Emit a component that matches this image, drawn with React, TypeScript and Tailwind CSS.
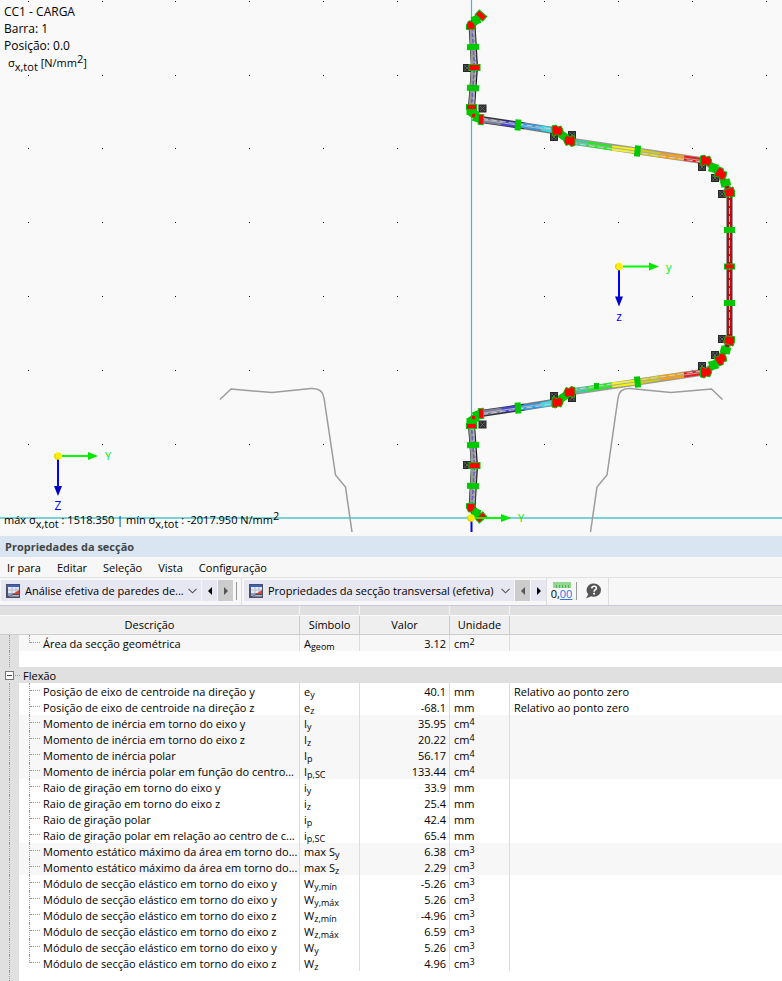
import React from 'react';

type Row = {
  label: string;
  symbol: string;
  sub: string;
  value: string;
  unit: string;
  exp?: string;
  note?: string;
  shaded?: boolean;
};

const BENDING_ROWS: Row[] = [
  { label: 'Posição de eixo de centroide na direção y', symbol: 'e', sub: 'y', value: '40.1', unit: 'mm', note: 'Relativo ao ponto zero' },
  { label: 'Posição de eixo de centroide na direção z', symbol: 'e', sub: 'z', value: '-68.1', unit: 'mm', note: 'Relativo ao ponto zero' },
  { label: 'Momento de inércia em torno do eixo y', symbol: 'I', sub: 'y', value: '35.95', unit: 'cm', exp: '4', shaded: true },
  { label: 'Momento de inércia em torno do eixo z', symbol: 'I', sub: 'z', value: '20.22', unit: 'cm', exp: '4', shaded: true },
  { label: 'Momento de inércia polar', symbol: 'I', sub: 'p', value: '56.17', unit: 'cm', exp: '4', shaded: true },
  { label: 'Momento de inércia polar em função do centro...', symbol: 'I', sub: 'p,SC', value: '133.44', unit: 'cm', exp: '4', shaded: true },
  { label: 'Raio de giração em torno do eixo y', symbol: 'i', sub: 'y', value: '33.9', unit: 'mm' },
  { label: 'Raio de giração em torno do eixo z', symbol: 'i', sub: 'z', value: '25.4', unit: 'mm' },
  { label: 'Raio de giração polar', symbol: 'i', sub: 'p', value: '42.4', unit: 'mm' },
  { label: 'Raio de giração polar em relação ao centro de c...', symbol: 'i', sub: 'p,SC', value: '65.4', unit: 'mm' },
  { label: 'Momento estático máximo da área em torno do...', symbol: 'max S', sub: 'y', value: '6.38', unit: 'cm', exp: '3', shaded: true },
  { label: 'Momento estático máximo da área em torno do...', symbol: 'max S', sub: 'z', value: '2.29', unit: 'cm', exp: '3', shaded: true },
  { label: 'Módulo de secção elástico em torno do eixo y', symbol: 'W', sub: 'y,mín', value: '-5.26', unit: 'cm', exp: '3' },
  { label: 'Módulo de secção elástico em torno do eixo y', symbol: 'W', sub: 'y,máx', value: '5.26', unit: 'cm', exp: '3' },
  { label: 'Módulo de secção elástico em torno do eixo z', symbol: 'W', sub: 'z,mín', value: '-4.96', unit: 'cm', exp: '3' },
  { label: 'Módulo de secção elástico em torno do eixo z', symbol: 'W', sub: 'z,máx', value: '6.59', unit: 'cm', exp: '3' },
  { label: 'Módulo de secção elástico em torno do eixo y', symbol: 'W', sub: 'y', value: '5.26', unit: 'cm', exp: '3' },
  { label: 'Módulo de secção elástico em torno do eixo z', symbol: 'W', sub: 'z', value: '4.96', unit: 'cm', exp: '3' },
];

const AREA_ROW: Row = { label: 'Área da secção geométrica', symbol: 'A', sub: 'geom', value: '3.12', unit: 'cm', exp: '2', shaded: true };

const MENU = ['Ir para', 'Editar', 'Seleção', 'Vista', 'Configuração'];

const GRID_X = [28, 102, 175, 249, 323, 397, 471, 544, 618, 692, 766];
const GRID_Y = [1, 75, 148, 222, 296, 370, 444, 518];

// Stress colour bands along the upper half of the profile: x1, y1, x2, y2, colour
const BANDS: [number, number, number, number, string][] = [
  [482, 120, 502, 123, '#7c7c9e'],
  [502, 123, 519, 125, '#4646dc'],
  [519, 125, 541, 128, '#2f9be8'],
  [541, 128, 556, 131, '#22e0ee'],
  [571, 142, 588, 144, '#2fd394'],
  [588, 144, 612, 148, '#19f019'],
  [612, 148, 637, 151, '#f5f500'],
  [637, 151, 660, 155, '#d2cc10'],
  [660, 155, 684, 158, '#ffa000'],
  [684, 158, 705, 161, '#f01818'],
];

const Marker = ({ x, y, w, h, r = 0, red = false }: { x: number; y: number; w: number; h: number; r?: number; red?: boolean }) => (
  <rect
    x={x - w / 2}
    y={y - h / 2}
    width={w}
    height={h}
    fill={red ? '#ff0000' : '#00c800'}
    stroke="#00c000"
    strokeWidth={red ? 1 : 0}
    transform={`rotate(${r} ${x} ${y})`}
  />
);

const Knot = ({ x, y, r = 0 }: { x: number; y: number; r?: number }) => (
  <path
    d="M-5 -5 L-1 -6 L1 -4 L4 -5 L6 -1 L5.500 3 L3 5 L0 3.500 L-4 5.500 L-5 2 Z"
    fill="#ff0000"
    stroke="#00c000"
    strokeWidth="1"
    transform={`translate(${x} ${y}) rotate(${r})`}
  />
);

const Weld = ({ x, y }: { x: number; y: number }) => (
  <g transform={`translate(${x} ${y})`}>
    <rect x="-4" y="-4" width="8" height="8" fill="#282828" />
    <path d="M-2.500 -2.500 L2.500 2.500 M2.500 -2.500 L-2.500 2.500" stroke="#777" strokeWidth="0.7" fill="none" />
    <rect x="-2.500" y="-2.500" width="5" height="5" stroke="#555" strokeWidth="0.5" fill="none" />
  </g>
);

const HalfProfile = () => (
  <g>
    <polyline points="480,15 472,25 474.5,67 471.5,108 475,115 481,119.5" fill="none" stroke="#111" strokeWidth="7" />
    <polyline points="480,15 472,25 474,67 471.5,108 475,115 481,119.5" fill="none" stroke="#9a9a9a" strokeWidth="5.600" />
    <polyline points="472,27 474.5,67 471.5,106" fill="none" stroke="#6262c4" strokeWidth="1.5" strokeDasharray="4 2" />
    <polyline points="473.5,27 476,67 473,106" fill="none" stroke="#ccc" strokeWidth="0.7" strokeDasharray="3 2" />
    <line x1="481" y1="119.5" x2="525" y2="126" stroke="#333" strokeWidth="7" />
    <line x1="525" y1="126" x2="556" y2="131" stroke="#777" strokeWidth="7" />
    <polyline points="556,131 563,136 570,141 705,161 713,167 720,174 725,183 729.5,192" fill="none" stroke="#9a9a9a" strokeWidth="7" />
    <polyline points="705,161 713,167 720,174 725,183 729.5,192" fill="none" stroke="#a01010" strokeWidth="4" />
    {BANDS.map(([x1, y1, x2, y2, color]) => (
      <line key={x1} x1={x1} y1={y1} x2={x2} y2={y2} stroke={color} strokeWidth="5" />
    ))}
    <line x1="482" y1="119.8" x2="556" y2="130.8" stroke="#b5b5b5" strokeWidth="1" />
    <line x1="571" y1="141.8" x2="705" y2="161" stroke="#aaa" strokeWidth="1" />
    <path d="M482 118.5 L556 129.5 M571 143 L705 162.5" stroke="#ddd" strokeWidth="0.8" strokeDasharray="6 3" />

    <Weld x={467} y={68} />
    <Weld x={482.5} y={108.5} />
    <Weld x={554} y={137} />
    <Weld x={572} y={135} />
    <Weld x={702} y={167} />
    <Weld x={715} y={178} />
    <Weld x={722} y={194} />

    <Marker x={476} y={20} w={8} h={9} r={-25} />
    <Marker x={481} y={15.5} w={10} h={6} r={42} red />
    <path d="M466.5 29.5 V25 L468.5 21 L472 21 L475 25 V29.5 Z" fill="#ff0000" stroke="#00c000" strokeWidth="1" />
    <Marker x={473} y={47} w={12} h={6} r={-2} />
    <Marker x={474.5} y={67.5} w={11} h={6} red />
    <Marker x={473} y={88} w={12} h={6} r={2} />
    <Marker x={471.5} y={112} w={10} h={6} />
    <Marker x={474} y={114} w={9} h={8} r={25} />
    <Marker x={477} y={118} w={8} h={8} r={20} />
    <Marker x={471.5} y={107} w={10} h={5} red />
    <Marker x={473.5} y={115.5} w={4} h={4} red />
    <Marker x={481} y={119.5} w={5} h={10} r={3} red />
    <Marker x={518} y={125} w={6} h={11} r={5} />
    <Marker x={563.5} y={136} w={8} h={8} r={35} />
    <Knot x={557} y={131} />
    <Knot x={570} y={140.5} r={180} />
    <Marker x={637.5} y={151} w={6} h={11} r={6} />
    <Marker x={713.5} y={168} w={9} h={9} r={15} />
    <Marker x={725.5} y={183} w={10} h={7} r={-15} />
    <Knot x={705.5} y={161} />
    <Knot x={720.5} y={174} r={35} />
    <path d="M723.500 190 L733 187 L734.500 191 V196.5 L725.500 197 Z" fill="#ff0000" stroke="#00c000" strokeWidth="1" />
    <Marker x={729.5} y={230} w={11} h={6} />
  </g>
);

const Axes = ({ x, y, h, v, vertical = true }: { x: number; y: number; h: string; v?: string; vertical?: boolean }) => (
  <g transform={`translate(${x} ${y})`}>
    <path d="M4 0 H31" stroke="#00f800" strokeWidth="2" />
    <path d="M30 -4 L40 0 L30 4 Z" fill="#00e800" />
    <text x="47" y="4" fontSize="11" fill="#00e800">{h}</text>
    {vertical && (
      <>
        <path d="M0 3 V31" stroke="#0000ff" strokeWidth="2" />
        <path d="M-4 30 L0 40 L4 30 Z" fill="#0000c8" />
        <text x="0" y="54" fontSize="12" textAnchor="middle" fill="#0000ff">{v}</text>
      </>
    )}
    <circle r="3.8" fill="#ffee00" />
    <path d="M-2.8 -2 A3.6 3.6 0 0 0 0 3.6" fill="none" stroke="#d8b400" strokeWidth="0.8" />
  </g>
);

const Drawing = () => (
  <svg className="block h-full w-full" viewBox="0 0 782 532" preserveAspectRatio="xMinYMin slice" aria-label="Secção transversal">
    {GRID_Y.map(y => GRID_X.map(x => <rect key={`${x}-${y}`} x={x} y={y} width="1" height="1" fill="#000" />))}
    <path d="M471.500 0 V518" stroke="#38c0c0" strokeWidth="1.200" />
    <path d="M0 518 H782" stroke="#78d4d4" strokeWidth="2" />
    <g fill="none" stroke="#9c9c9c" strokeWidth="1.5">
      <path d="M220 399.500 L231 389 L272 392.500 L311 388.500 Q323 388 324 398 L335.500 475 L345.500 487 L352 532" />
      <path d="M722.500 399.500 L711.500 389 L671 392.500 L630 388.500 Q619 388 618 398 L607 475 L597 487 L590.500 532" />
    </g>
    <g>
      <line x1="729.500" y1="192" x2="729.500" y2="341" stroke="#9a9a9a" strokeWidth="7" />
      <line x1="729.500" y1="192" x2="729.500" y2="341" stroke="#b80c0c" strokeWidth="5" />
      <line x1="729.500" y1="192" x2="729.500" y2="341" stroke="#ddd" strokeWidth="1" strokeDasharray="6 2" />
    </g>
    <HalfProfile />
    <g transform="translate(0 533) scale(1 -1)">
      <HalfProfile />
    </g>
    <Marker x={729.5} y={266.5} w={10} h={5} red />
    <Marker x={596.5} y={386} w={5} h={6} />
    <Axes x={619} y={266.5} h="y" v="z" />
    <Axes x={58} y={456} h="Y" v="Z" />
    <path d="M471.500 518 V532" stroke="#0000ff" strokeWidth="2" />
    <Axes x={471} y={518} h="Y" vertical={false} />
  </svg>
);

const Sigma = () => (
  <>
    σ<span className="relative top-1">x,tot</span>
  </>
);

const TableIcon = () => (
  <svg width="14" height="14" viewBox="0 0 14 14" className="shrink-0">
    <rect width="14" height="14" fill="#4a5062" />
    <rect x="1" y="1" width="12" height="3" fill="#3c5fc4" />
    <rect x="2" y="3" width="11" height="6" fill="#e6e9f0" />
    <path d="M2 6 H13 M6 3 V9 M10 3 V9" stroke="#b3bccd" strokeWidth="1" />
    <path d="M2 9 H8 L4 12 H2 Z" fill="#8fa0c8" />
    <path d="M7 10 L13 6 V10 Z" fill="#d84030" />
    <path d="M3 12.500 H13 V11 H7 Z" fill="#b4bac6" />
  </svg>
);

const Combo = ({ label, value, width }: { label: string; value: string; width: string }) => (
  <div className={`relative flex h-[21px] items-center bg-[#e7e7f2] ${width}`}>
    <span className="pointer-events-none absolute left-[5px]"><TableIcon /></span>
    <select aria-label={label} className="h-full w-full appearance-none bg-transparent pr-4 pl-6 text-[11px] leading-4 outline-none">
      <option>{value}</option>
    </select>
    <svg width="9" height="6" viewBox="0 0 9 6" className="pointer-events-none absolute right-1">
      <path d="M0.500 0.800 L4.500 4.800 L8.500 0.800" fill="none" stroke="#555" strokeWidth="1.100" />
    </svg>
  </div>
);

const ArrowButton = ({ label, left = false, disabled = false }: { label: string; left?: boolean; disabled?: boolean }) => (
  <button
    aria-label={label}
    disabled={disabled}
    className={`flex h-[21px] w-[15px] items-center justify-center ${disabled ? 'bg-[#cccccc] text-[#555]' : 'bg-[#e7e7f2] text-black'}`}
  >
    <svg width="4" height="8" viewBox="0 0 4 8" fill="currentColor">
      <path d={left ? 'M4 0 V8 L0 4 Z' : 'M0 0 V8 L4 4 Z'} />
    </svg>
  </button>
);

const Toolbar = () => (
  <div className="flex h-7 overflow-hidden border-b border-[#c8c8d8] bg-[#f7f7f7]">
    <div className="flex h-full items-center gap-px border-r border-[#dedede] pr-1 pb-0.5 pl-px">
      <Combo label="Tabela" value="Análise efetiva de paredes de..." width="w-[200px]" />
      <ArrowButton label="Tabela anterior" left />
      <ArrowButton label="Tabela seguinte" disabled />
      <span className="ml-0.5 h-[18px] w-px bg-[#999]" />
    </div>
    <div className="flex h-full items-center gap-px border-r border-[#dedede] pb-0.5 pl-0.5">
      <Combo label="Secção da tabela" value="Propriedades da secção transversal (efetiva)" width="w-[270px]" />
      <ArrowButton label="Secção anterior" left disabled />
      <ArrowButton label="Secção seguinte" />
    </div>
    <div className="flex h-full items-center border-r border-[#dedede] pr-1.5 pb-0.5 pl-1">
      <button aria-label="Casas decimais" className="mr-1 flex w-[21px] flex-col items-center">
        <svg width="18" height="6" viewBox="0 0 18 6">
          <rect width="18" height="6" fill="#93d890" />
          <path d="M3.500 3 V6 M6.500 3 V6 M9.500 3 V6 M12.500 3 V6 M15.500 3 V6" stroke="#5cae5c" strokeWidth="1" />
        </svg>
        <span className="text-[11px] leading-3">0,<span className="text-[#2f74dc] underline">00</span></span>
      </button>
      <span className="h-[18px] w-px bg-[#999]" />
      <button aria-label="Ajuda" className="ml-2">
        <svg width="17" height="16" viewBox="0 0 17 16">
          <path d="M9 0.500 A7 6.600 0 0 1 9 13.700 Q7.500 13.800 6 13.200 L1 15.500 L3.200 11.300 A6.800 6.600 0 0 1 9 0.500 Z" fill="#555" />
          <path d="M6.700 5.300 Q6.900 3.200 9.100 3.200 Q11.400 3.200 11.400 5 Q11.400 6.200 10 7 Q9.100 7.600 9.100 8.700" fill="none" stroke="#fff" strokeWidth="1.600" />
          <rect x="8.200" y="9.800" width="1.800" height="1.700" fill="#fff" />
        </svg>
      </button>
    </div>
  </div>
);

const Gutter = () => (
  <span className="flex w-[19px] shrink-0 self-stretch bg-[#e0e0e0] pl-[9px]">
    <span className="border-l border-dotted border-[#999]" />
  </span>
);

const DataRow = ({ row, last = false }: { row: Row; last?: boolean }) => (
  <tr className={`h-4 ${row.shaded ? 'bg-[#f7f7f7]' : 'bg-white'}`}>
    <td className="border-r border-[#dcdcdc] p-0">
      <div className="flex h-4 whitespace-nowrap">
        <Gutter />
        <span className={`ml-[10px] w-[11px] shrink-0 border-l border-dotted border-[#999] ${last ? 'h-2' : 'h-4'}`}>
          <span className="block h-2 border-b border-dotted border-[#999]" />
        </span>
        <span className="pl-[3px] leading-[18px]">{row.label}</span>
      </div>
    </td>
    <td className="border-r border-[#dcdcdc] p-0">
      <div className="h-4 pl-1 leading-[18px] whitespace-nowrap">
        {row.symbol}<span className="relative top-0.5 text-[9px] leading-3">{row.sub}</span>
      </div>
    </td>
    <td className="border-r border-[#dcdcdc] p-0">
      <div className="h-4 pr-[3px] text-right leading-[18px]">{row.value}</div>
    </td>
    <td className="border-r border-[#dcdcdc] p-0">
      <div className="h-4 pl-1 leading-[18px]">
        {row.unit}{row.exp && <span className="relative -top-[3px] text-[9px] leading-3">{row.exp}</span>}
      </div>
    </td>
    <td className="p-0">
      <div className="h-4 pl-1 leading-[18px]">{row.note}</div>
    </td>
  </tr>
);

const PropertiesTable = () => (
  <table className="w-full table-fixed border-separate border-spacing-0 text-[11px] leading-4">
    <colgroup>
      <col className="w-[300px]" />
      <col className="w-[60px]" />
      <col className="w-[90px]" />
      <col className="w-[60px]" />
      <col />
    </colgroup>
    <thead>
      <tr className="h-[9px] bg-[#e0e0e0]" aria-hidden="true">
        {[0, 1, 2, 3].map(i => <td key={i} className="h-[9px] border-r border-[#f4f4f4] p-0" />)}
        <td className="p-0" />
      </tr>
      <tr className="h-5 bg-[#efefef]">
        {['Descrição', 'Símbolo', 'Valor', 'Unidade'].map(name => (
          <th key={name} scope="col" className="h-5 border-t border-r border-b border-t-[#fafafa] border-r-[#cccccc] border-b-[#cccccc] p-0 text-center font-normal">
            {name}
          </th>
        ))}
        <td className="border-t border-b border-t-[#fafafa] border-b-[#cccccc] p-0" />
      </tr>
    </thead>
    <tbody>
      <DataRow row={AREA_ROW} last />
      <tr className="h-4 bg-white">
        <td colSpan={5} className="p-0"><div className="flex h-4"><Gutter /></div></td>
      </tr>
      <tr className="h-4 bg-[#e0e0e0]">
        <th colSpan={5} scope="rowgroup" className="p-0 text-left font-normal">
          <div className="flex h-4 items-center">
            <button aria-label="Recolher Flexão" className="ml-[5px] flex h-[9px] w-[9px] items-center justify-center border border-[#777] bg-white">
              <span className="h-px w-[5px] bg-[#444]" />
            </button>
            <span className="ml-px w-[5px] border-b border-dotted border-[#999]" />
            <span className="h-4 pl-[3px] leading-[18px]">Flexão</span>
          </div>
        </th>
      </tr>
      {BENDING_ROWS.map((row, i) => (
        <DataRow key={i} row={row} last={i === BENDING_ROWS.length - 1} />
      ))}
    </tbody>
  </table>
);

const App: React.FC = () => {
  return (
    <div className="flex min-h-screen flex-col bg-white font-['Open_Sans','Noto_Sans',sans-serif] text-[11px] leading-4 text-black">
      <main className="relative h-[532px] overflow-hidden bg-[#f9f9f9]">
        <Drawing />
        <div className="absolute top-[3px] left-1 text-[12px] leading-[17px]">
          <p>CC1 - CARGA</p>
          <p>Barra: 1</p>
          <p>Posição: 0.0</p>
          <p className="pl-1 text-[11px]"><Sigma /> [N/mm<span className="relative -top-1">2</span>]</p>
        </div>
        <p className="absolute bottom-1 left-1 text-[11px] leading-[17px] whitespace-nowrap">
          máx <Sigma /> : 1518.350 | mín <Sigma /> : -2017.950 N/mm<span className="relative -top-1">2</span>
        </p>
      </main>

      <section className="flex grow flex-col border-t-4 border-[#f7f7f7]">
        <h2 className="h-[21px] bg-[#d9e6f2] pl-[5px] text-[11px] leading-[21px] font-bold text-[#444]">Propriedades da secção</h2>
        <nav className="flex h-[21px] items-center gap-4 border-b border-[#e2e2e2] bg-[#f7f7f7] pt-0.5 pl-[7px]">
          {MENU.map(item => <button key={item}>{item}</button>)}
        </nav>
        <Toolbar />
        <PropertiesTable />
        <div className="flex grow"><Gutter /></div>
      </section>
    </div>
  );
};

export default App;
